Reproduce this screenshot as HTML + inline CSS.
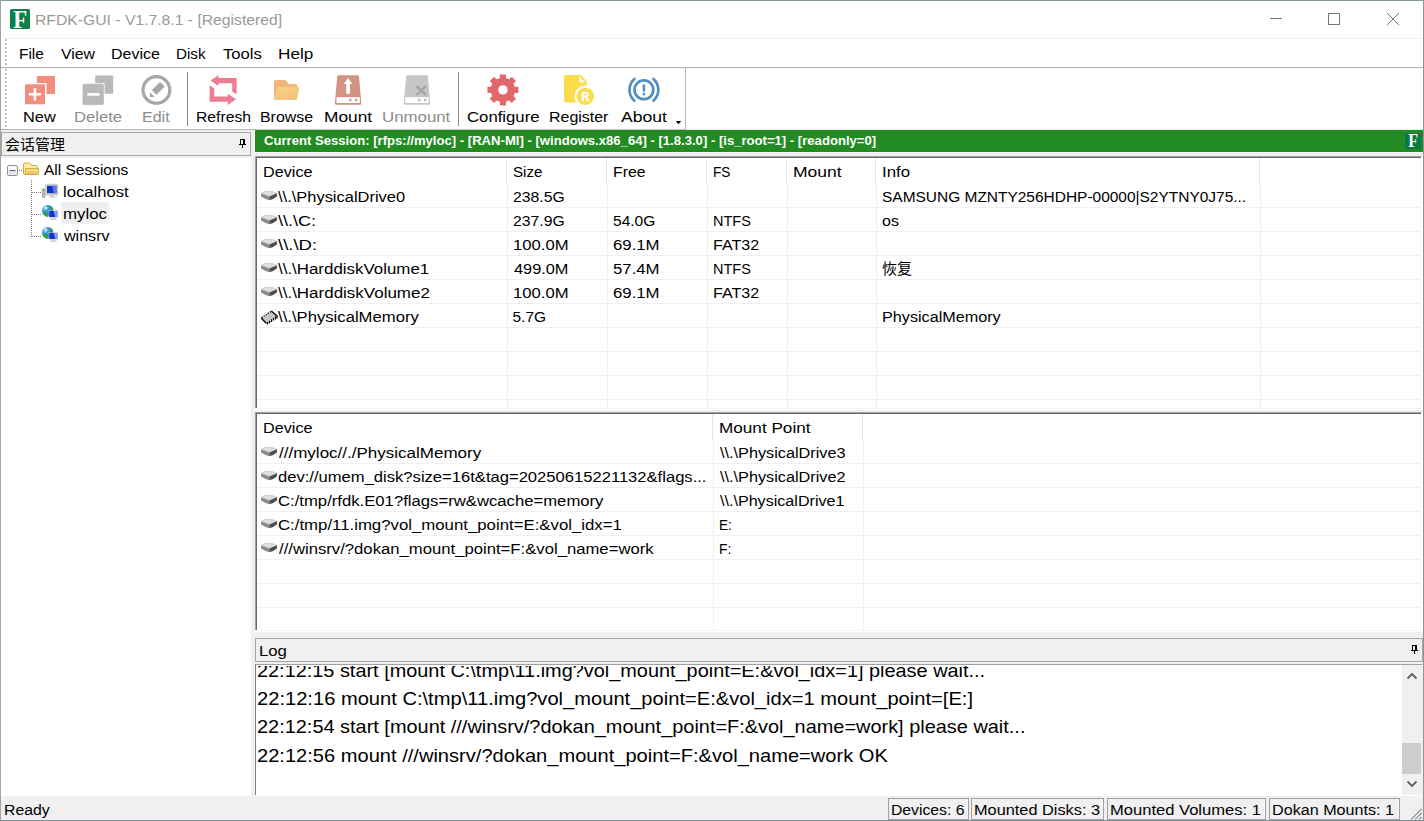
<!DOCTYPE html>
<html lang="en">
<head>
<meta charset="utf-8">
<title>RFDK-GUI - V1.7.8.1 - [Registered]</title>
<style>
*{box-sizing:border-box;margin:0;padding:0}
html,body{width:1424px;height:821px;overflow:hidden;background:#fff}
body{font-family:"Liberation Sans","Noto Sans CJK SC",sans-serif;font-size:16px;color:#000;position:relative}
.a{position:absolute}
.t{position:absolute;white-space:pre;transform-origin:0 0}
svg{position:absolute;overflow:visible}
</style>
</head>
<body>

<div class="a" style="left:0px;top:0px;width:1424px;height:821px;background:#fff;"></div>
<div class="a" style="left:1px;top:130px;width:1422px;height:691px;background:#f0f0f0;"></div>
<div class="a" style="left:1px;top:38px;width:1422px;height:1px;background:#eef1fa;"></div>
<div class="a" style="left:1px;top:67px;width:1422px;height:1px;background:#b3b3b3;"></div>
<div class="a" style="left:1px;top:68px;width:1422px;height:1px;background:#f3f5fc;"></div>
<div class="a" style="left:1px;top:129px;width:254px;height:1px;background:#b0b0b0;"></div>
<div class="a" style="left:255px;top:129px;width:431px;height:1px;background:#cdc4cc;"></div>
<div class="a" style="left:686px;top:129px;width:737px;height:1px;background:#f5e9f3;"></div>
<div class="a" style="left:685px;top:68px;width:1px;height:62px;background:#b8b8b8;"></div>
<div class="a" style="left:5px;top:39px;width:2px;height:26px;background:repeating-linear-gradient(to bottom,#c6c6c6 0,#b4b4b4 2px,transparent 2px,transparent 4px)"></div>
<div class="a" style="left:5px;top:69px;width:2px;height:58px;background:repeating-linear-gradient(to bottom,#c6c6c6 0,#b4b4b4 2px,transparent 2px,transparent 4px)"></div>
<div class="a" style="left:187px;top:72px;width:1px;height:54px;background:#8c8c8c;"></div>
<div class="a" style="left:458px;top:72px;width:1px;height:54px;background:#8c8c8c;"></div>
<div class="a" style="left:1px;top:132px;width:250px;height:24px;background:#f0f0f0;border:1px solid #a6a6a6"></div>
<div class="a" style="left:1px;top:158px;width:250px;height:638px;background:#fff;"></div>
<div class="a" style="left:61px;top:202px;width:48px;height:22px;background:#f0f0f0;"></div>
<div class="a" style="left:254px;top:130px;width:1px;height:22px;background:#fbf4fa;"></div>
<div class="a" style="left:255px;top:130px;width:1168px;height:22px;background:#228b22;"></div>
<div class="a" style="left:255px;top:152px;width:1168px;height:1px;background:#fbf4fa;"></div>
<div class="a" style="left:255px;top:156px;width:1167px;height:253px;background:#fff;"></div><div class="a" style="left:255px;top:156px;width:1167px;height:1px;background:#a0a0a0;"></div><div class="a" style="left:255px;top:156px;width:1px;height:252px;background:#a0a0a0;"></div><div class="a" style="left:256px;top:157px;width:1166px;height:1px;background:#696969;"></div><div class="a" style="left:256px;top:157px;width:1px;height:251px;background:#696969;"></div><div class="a" style="left:257px;top:408px;width:1164px;height:1px;background:#f4f4f4;"></div><div class="a" style="left:1421px;top:156px;width:1px;height:253px;background:#fff;"></div><div class="a" style="left:1422px;top:156px;width:1px;height:254px;background:#fff;"></div><div class="a" style="left:255px;top:409px;width:1168px;height:1px;background:#fff;"></div><div class="a" style="left:506px;top:158px;width:1px;height:26px;background:#e5e5e5;"></div><div class="a" style="left:606px;top:158px;width:1px;height:26px;background:#e5e5e5;"></div><div class="a" style="left:706px;top:158px;width:1px;height:26px;background:#e5e5e5;"></div><div class="a" style="left:786px;top:158px;width:1px;height:26px;background:#e5e5e5;"></div><div class="a" style="left:875px;top:158px;width:1px;height:26px;background:#e5e5e5;"></div><div class="a" style="left:1259px;top:158px;width:1px;height:26px;background:#e5e5e5;"></div><div class="a" style="left:507px;top:184px;width:1px;height:225px;background:#f0f0f0;"></div><div class="a" style="left:607px;top:184px;width:1px;height:225px;background:#f0f0f0;"></div><div class="a" style="left:707px;top:184px;width:1px;height:225px;background:#f0f0f0;"></div><div class="a" style="left:787px;top:184px;width:1px;height:225px;background:#f0f0f0;"></div><div class="a" style="left:876px;top:184px;width:1px;height:225px;background:#f0f0f0;"></div><div class="a" style="left:1260px;top:184px;width:1px;height:225px;background:#f0f0f0;"></div><div class="a" style="left:257px;top:207px;width:1164px;height:1px;background:#f0f0f0;"></div><div class="a" style="left:257px;top:231px;width:1164px;height:1px;background:#f0f0f0;"></div><div class="a" style="left:257px;top:255px;width:1164px;height:1px;background:#f0f0f0;"></div><div class="a" style="left:257px;top:279px;width:1164px;height:1px;background:#f0f0f0;"></div><div class="a" style="left:257px;top:303px;width:1164px;height:1px;background:#f0f0f0;"></div><div class="a" style="left:257px;top:327px;width:1164px;height:1px;background:#f0f0f0;"></div><div class="a" style="left:257px;top:351px;width:1164px;height:1px;background:#f0f0f0;"></div><div class="a" style="left:257px;top:375px;width:1164px;height:1px;background:#f0f0f0;"></div><div class="a" style="left:257px;top:399px;width:1164px;height:1px;background:#f0f0f0;"></div>
<div class="a" style="left:255px;top:412px;width:1167px;height:219px;background:#fff;"></div><div class="a" style="left:255px;top:412px;width:1167px;height:1px;background:#a0a0a0;"></div><div class="a" style="left:255px;top:412px;width:1px;height:218px;background:#a0a0a0;"></div><div class="a" style="left:256px;top:413px;width:1166px;height:1px;background:#696969;"></div><div class="a" style="left:256px;top:413px;width:1px;height:217px;background:#696969;"></div><div class="a" style="left:257px;top:630px;width:1164px;height:1px;background:#f4f4f4;"></div><div class="a" style="left:1421px;top:412px;width:1px;height:219px;background:#fff;"></div><div class="a" style="left:1422px;top:412px;width:1px;height:220px;background:#fff;"></div><div class="a" style="left:255px;top:631px;width:1168px;height:1px;background:#fff;"></div><div class="a" style="left:712px;top:414px;width:1px;height:26px;background:#e5e5e5;"></div><div class="a" style="left:862px;top:414px;width:1px;height:26px;background:#e5e5e5;"></div><div class="a" style="left:713px;top:440px;width:1px;height:191px;background:#f0f0f0;"></div><div class="a" style="left:863px;top:440px;width:1px;height:191px;background:#f0f0f0;"></div><div class="a" style="left:257px;top:463px;width:1164px;height:1px;background:#f0f0f0;"></div><div class="a" style="left:257px;top:487px;width:1164px;height:1px;background:#f0f0f0;"></div><div class="a" style="left:257px;top:511px;width:1164px;height:1px;background:#f0f0f0;"></div><div class="a" style="left:257px;top:535px;width:1164px;height:1px;background:#f0f0f0;"></div><div class="a" style="left:257px;top:559px;width:1164px;height:1px;background:#f0f0f0;"></div><div class="a" style="left:257px;top:583px;width:1164px;height:1px;background:#f0f0f0;"></div><div class="a" style="left:257px;top:607px;width:1164px;height:1px;background:#f0f0f0;"></div>
<div class="a" style="left:255px;top:638px;width:1168px;height:24px;background:#f0f0f0;border:1px solid #a6a6a6"></div>
<div class="a" style="left:255px;top:664px;width:1167px;height:132px;background:#fff;"></div>
<div class="a" style="left:255px;top:664px;width:1167px;height:1px;background:#a0a0a0;"></div>
<div class="a" style="left:255px;top:664px;width:1px;height:131px;background:#828282;"></div>
<div class="a" style="left:1px;top:797px;width:1422px;height:24px;background:#f0f0f0;"></div>
<div class="t" style="left:35px;top:10px;font-size:15.5px;line-height:20px;height:20px;transform:scaleX(1.0136);color:#9a9a9a;">RFDK-GUI - V1.7.8.1 - [Registered]</div>
<div class="t" style="left:18.7px;top:44px;font-size:15.5px;line-height:20px;height:20px;transform:scaleX(0.9922);">File</div>
<div class="t" style="left:60.7px;top:44px;font-size:15.5px;line-height:20px;height:20px;transform:scaleX(1.0212);">View</div>
<div class="t" style="left:110.9px;top:44px;font-size:15.5px;line-height:20px;height:20px;transform:scaleX(1.0327);">Device</div>
<div class="t" style="left:175.8px;top:44px;font-size:15.5px;line-height:20px;height:20px;transform:scaleX(0.9795);">Disk</div>
<div class="t" style="left:222.5px;top:44px;font-size:15.5px;line-height:20px;height:20px;transform:scaleX(1.075);">Tools</div>
<div class="t" style="left:277.8px;top:44px;font-size:15.5px;line-height:20px;height:20px;transform:scaleX(1.1069);">Help</div>
<div class="t" style="left:22.8px;top:107px;font-size:15.5px;line-height:20px;height:20px;transform:scaleX(1.0538);">New</div>
<div class="t" style="left:74px;top:107px;font-size:15.5px;line-height:20px;height:20px;transform:scaleX(1.0722);color:#8c8c8c;">Delete</div>
<div class="t" style="left:142.3px;top:107px;font-size:15.5px;line-height:20px;height:20px;transform:scaleX(1.035);color:#8c8c8c;">Edit</div>
<div class="t" style="left:195.6px;top:107px;font-size:15.5px;line-height:20px;height:20px;transform:scaleX(1.0152);">Refresh</div>
<div class="t" style="left:260.2px;top:107px;font-size:15.5px;line-height:20px;height:20px;transform:scaleX(1.0263);">Browse</div>
<div class="t" style="left:324.1px;top:107px;font-size:15.5px;line-height:20px;height:20px;transform:scaleX(1.1169);">Mount</div>
<div class="t" style="left:382.4px;top:107px;font-size:15.5px;line-height:20px;height:20px;transform:scaleX(1.0855);color:#8c8c8c;">Unmount</div>
<div class="t" style="left:466.5px;top:107px;font-size:15.5px;line-height:20px;height:20px;transform:scaleX(1.0789);">Configure</div>
<div class="t" style="left:549.2px;top:107px;font-size:15.5px;line-height:20px;height:20px;transform:scaleX(1.0298);">Register</div>
<div class="t" style="left:621.4px;top:107px;font-size:15.5px;line-height:20px;height:20px;transform:scaleX(1.1346);">About</div>
<div class="t" style="left:44.1px;top:160px;font-size:15.5px;line-height:20px;height:20px;transform:scaleX(0.9989);">All Sessions</div>
<div class="t" style="left:62.6px;top:182px;font-size:15.5px;line-height:20px;height:20px;transform:scaleX(1.0734);">localhost</div>
<div class="t" style="left:62.6px;top:204px;font-size:15.5px;line-height:20px;height:20px;transform:scaleX(1.0873);">myloc</div>
<div class="t" style="left:63.6px;top:226px;font-size:15.5px;line-height:20px;height:20px;transform:scaleX(1.0364);">winsrv</div>
<div class="t" style="left:264.3px;top:131px;font-size:13.5px;line-height:20px;height:20px;transform:scaleX(0.9703);font-weight:bold;color:#fff;">Current Session: [rfps://myloc] - [RAN-MI] - [windows.x86_64] - [1.8.3.0] - [is_root=1] - [readonly=0]</div>
<div class="t" style="left:262.7px;top:162px;font-size:15.5px;line-height:20px;height:20px;transform:scaleX(1.0458);">Device</div>
<div class="t" style="left:512.5px;top:162px;font-size:15.5px;line-height:20px;height:20px;transform:scaleX(0.9759);">Size</div>
<div class="t" style="left:612.8px;top:162px;font-size:15.5px;line-height:20px;height:20px;transform:scaleX(1.0234);">Free</div>
<div class="t" style="left:712.5px;top:162px;font-size:15.5px;line-height:20px;height:20px;transform:scaleX(0.88);">FS</div>
<div class="t" style="left:792.5px;top:162px;font-size:15.5px;line-height:20px;height:20px;transform:scaleX(1.1286);">Mount</div>
<div class="t" style="left:881.6px;top:162px;font-size:15.5px;line-height:20px;height:20px;transform:scaleX(1.0879);">Info</div>
<div class="t" style="left:278.4px;top:187px;font-size:15.5px;line-height:20px;height:20px;transform:scaleX(1.0613);">\\.\PhysicalDrive0</div>
<div class="t" style="left:512.5px;top:187px;font-size:15.5px;line-height:20px;height:20px;transform:scaleX(1.0185);">238.5G</div>
<div class="t" style="left:881.6px;top:187px;font-size:15.5px;line-height:20px;height:20px;transform:scaleX(0.9978);">SAMSUNG MZNTY256HDHP-00000|S2YTNY0J75...</div>
<div class="t" style="left:278.4px;top:211px;font-size:15.5px;line-height:20px;height:20px;transform:scaleX(1.1629);">\\.\C:</div>
<div class="t" style="left:512.5px;top:211px;font-size:15.5px;line-height:20px;height:20px;transform:scaleX(1.0185);">237.9G</div>
<div class="t" style="left:612.8px;top:211px;font-size:15.5px;line-height:20px;height:20px;transform:scaleX(1.0027);">54.0G</div>
<div class="t" style="left:712.5px;top:211px;font-size:15.5px;line-height:20px;height:20px;transform:scaleX(0.9361);">NTFS</div>
<div class="t" style="left:881.6px;top:211px;font-size:15.5px;line-height:20px;height:20px;transform:scaleX(1.0344);">os</div>
<div class="t" style="left:278.4px;top:235px;font-size:15.5px;line-height:20px;height:20px;transform:scaleX(1.1942);">\\.\D:</div>
<div class="t" style="left:512.5px;top:235px;font-size:15.5px;line-height:20px;height:20px;transform:scaleX(1.074);">100.0M</div>
<div class="t" style="left:612.8px;top:235px;font-size:15.5px;line-height:20px;height:20px;transform:scaleX(1.0805);">69.1M</div>
<div class="t" style="left:712.5px;top:235px;font-size:15.5px;line-height:20px;height:20px;transform:scaleX(1.0396);">FAT32</div>
<div class="t" style="left:278.4px;top:259px;font-size:15.5px;line-height:20px;height:20px;transform:scaleX(1.0899);">\\.\HarddiskVolume1</div>
<div class="t" style="left:513.5px;top:259px;font-size:15.5px;line-height:20px;height:20px;transform:scaleX(1.053);">499.0M</div>
<div class="t" style="left:612.8px;top:259px;font-size:15.5px;line-height:20px;height:20px;transform:scaleX(1.0805);">57.4M</div>
<div class="t" style="left:712.5px;top:259px;font-size:15.5px;line-height:20px;height:20px;transform:scaleX(0.9361);">NTFS</div>
<div class="t" style="left:278.4px;top:283px;font-size:15.5px;line-height:20px;height:20px;transform:scaleX(1.0949);">\\.\HarddiskVolume2</div>
<div class="t" style="left:512.5px;top:283px;font-size:15.5px;line-height:20px;height:20px;transform:scaleX(1.074);">100.0M</div>
<div class="t" style="left:612.8px;top:283px;font-size:15.5px;line-height:20px;height:20px;transform:scaleX(1.0805);">69.1M</div>
<div class="t" style="left:712.5px;top:283px;font-size:15.5px;line-height:20px;height:20px;transform:scaleX(1.0396);">FAT32</div>
<div class="t" style="left:278.4px;top:307px;font-size:15.5px;line-height:20px;height:20px;transform:scaleX(1.0756);">\\.\PhysicalMemory</div>
<div class="t" style="left:512.5px;top:307px;font-size:15.5px;line-height:20px;height:20px;transform:scaleX(1);">5.7G</div>
<div class="t" style="left:881.6px;top:307px;font-size:15.5px;line-height:20px;height:20px;transform:scaleX(1.0442);">PhysicalMemory</div>
<div class="t" style="left:262.7px;top:418px;font-size:15.5px;line-height:20px;height:20px;transform:scaleX(1.0458);">Device</div>
<div class="t" style="left:718.8px;top:418px;font-size:15.5px;line-height:20px;height:20px;transform:scaleX(1.1062);">Mount Point</div>
<div class="t" style="left:279px;top:443px;font-size:15.5px;line-height:20px;height:20px;transform:scaleX(1.0973);">///myloc//./PhysicalMemory</div>
<div class="t" style="left:719.8px;top:443px;font-size:15.5px;line-height:20px;height:20px;transform:scaleX(1.0488);">\\.\PhysicalDrive3</div>
<div class="t" style="left:278px;top:467px;font-size:15.5px;line-height:20px;height:20px;transform:scaleX(1.0701);">dev://umem_disk?size=16t&amp;tag=20250615221132&amp;flags...</div>
<div class="t" style="left:719.8px;top:467px;font-size:15.5px;line-height:20px;height:20px;transform:scaleX(1.0479);">\\.\PhysicalDrive2</div>
<div class="t" style="left:278px;top:491px;font-size:15.5px;line-height:20px;height:20px;transform:scaleX(1.0764);">C:/tmp/rfdk.E01?flags=rw&amp;wcache=memory</div>
<div class="t" style="left:719.8px;top:491px;font-size:15.5px;line-height:20px;height:20px;transform:scaleX(1.0395);">\\.\PhysicalDrive1</div>
<div class="t" style="left:278px;top:515px;font-size:15.5px;line-height:20px;height:20px;transform:scaleX(1.0826);">C:/tmp/11.img?vol_mount_point=E:&amp;vol_idx=1</div>
<div class="t" style="left:718.8px;top:515px;font-size:15.5px;line-height:20px;height:20px;transform:scaleX(0.88);">E:</div>
<div class="t" style="left:279px;top:539px;font-size:15.5px;line-height:20px;height:20px;transform:scaleX(1.0762);">///winsrv/?dokan_mount_point=F:&amp;vol_name=work</div>
<div class="t" style="left:718.8px;top:539px;font-size:15.5px;line-height:20px;height:20px;transform:scaleX(0.9023);">F:</div>
<div class="t" style="left:259px;top:641px;font-size:15.5px;line-height:20px;height:20px;transform:scaleX(1.08);">Log</div>
<div class="t" style="left:3.6px;top:800px;font-size:15.5px;line-height:20px;height:20px;transform:scaleX(1.0206);">Ready</div>
<div class="t" style="left:890.9px;top:800px;font-size:15.5px;line-height:20px;height:20px;transform:scaleX(1.0156);">Devices: 6</div>
<div class="t" style="left:973.6px;top:800px;font-size:15.5px;line-height:20px;height:20px;transform:scaleX(1.0526);">Mounted Disks: 3</div>
<div class="t" style="left:1109.9px;top:800px;font-size:15.5px;line-height:20px;height:20px;transform:scaleX(1.0679);">Mounted Volumes: 1</div>
<div class="t" style="left:1271.9px;top:800px;font-size:15.5px;line-height:20px;height:20px;transform:scaleX(1.0414);">Dokan Mounts: 1</div>
<div class="a" style="left:256px;top:666px;width:1146px;height:129px;overflow:hidden">
<div class="t" style="left:0.6px;top:-9px;font-size:19px;line-height:28px;height:28px;transform:scaleX(1.0466);">22:12:15 start [mount C:\tmp\11.img?vol_mount_point=E:&amp;vol_idx=1] please wait...</div>
<div class="t" style="left:0.6px;top:19px;font-size:19px;line-height:28px;height:28px;transform:scaleX(1.0589);">22:12:16 mount C:\tmp\11.img?vol_mount_point=E:&amp;vol_idx=1 mount_point=[E:]</div>
<div class="t" style="left:0.6px;top:47px;font-size:19px;line-height:28px;height:28px;transform:scaleX(1.0484);">22:12:54 start [mount ///winsrv/?dokan_mount_point=F:&amp;vol_name=work] please wait...</div>
<div class="t" style="left:0.6px;top:76px;font-size:19px;line-height:28px;height:28px;transform:scaleX(1.0571);">22:12:56 mount ///winsrv/?dokan_mount_point=F:&amp;vol_name=work OK</div>
</div>
<div class="t" style="left:5px;top:135px;font-size:15px;line-height:20px">会话管理</div>
<div class="t" style="left:882px;top:259px;font-size:15px;line-height:20px">恢复</div>
<div class="a" style="left:1402px;top:665px;width:20px;height:130px;background:#f0f0f0;"></div>
<div class="a" style="left:1402px;top:743px;width:19px;height:31px;background:#cdcdcd;"></div>
<svg style="left:1402px;top:665px" width="19" height="130" viewBox="0 0 19 130"><path d="M5.5 13.5L10 9l4.5 4.5" fill="none" stroke="#606060" stroke-width="1.8"/><path d="M5.5 116.5L10 121l4.5-4.5" fill="none" stroke="#606060" stroke-width="1.8"/></svg>
<div class="a" style="left:888px;top:798px;width:81px;height:22px;background:transparent;border:1px solid #a0a0a0"></div>
<div class="a" style="left:967px;top:799px;width:1px;height:20px;background:#fafafa;"></div>
<div class="a" style="left:971px;top:798px;width:133px;height:22px;background:transparent;border:1px solid #a0a0a0"></div>
<div class="a" style="left:1102px;top:799px;width:1px;height:20px;background:#fafafa;"></div>
<div class="a" style="left:1107px;top:798px;width:159px;height:22px;background:transparent;border:1px solid #a0a0a0"></div>
<div class="a" style="left:1264px;top:799px;width:1px;height:20px;background:#fafafa;"></div>
<div class="a" style="left:1269px;top:798px;width:131px;height:22px;background:transparent;border:1px solid #a0a0a0"></div>
<div class="a" style="left:1398px;top:799px;width:1px;height:20px;background:#fafafa;"></div>
<svg style="left:0;top:0" width="1424" height="821" viewBox="0 0 1424 821">
<!-- app icon -->
<rect x="10" y="9" width="20" height="20" rx="1.5" fill="#0a8147"/>
<text x="20.2" y="28" font-family="Liberation Serif,serif" font-weight="bold" font-size="24.5" text-anchor="middle" fill="#fff" transform="translate(20.200 0) scale(.93 1) translate(-20.200 0)">F</text>
<!-- window buttons -->
<g stroke="#777" stroke-width="1" fill="none">
<path d="M1270 18.5h12"/>
<rect x="1328.5" y="13.5" width="11" height="11"/>
<path d="M1387 13l12 12M1399 13l-12 12"/>
</g>
<!-- green bar small icon -->
<rect x="1405" y="133" width="16" height="16" fill="#057a45"/>
<text x="1413.2" y="147.5" font-family="Liberation Serif,serif" font-weight="bold" font-size="19" text-anchor="middle" fill="#fff" transform="translate(1413.2 0) scale(.85 1) translate(-1413.2 0)">F</text>

<!-- New -->
<rect x="37" y="76" width="18" height="18" fill="#f28e80"/>
<rect x="24" y="83" width="22.5" height="22" fill="#fff"/>
<rect x="25" y="84.3" width="20" height="20" fill="#f28e80"/>
<path d="M29.8 94.3h10.2M34.9 89.3v10.2" stroke="#fff" stroke-width="2.6" stroke-linecap="round"/>
<!-- Delete -->
<rect x="95.2" y="75.5" width="18" height="18.3" fill="#b9b9b9"/>
<rect x="82" y="83.2" width="22.6" height="22" fill="#fff"/>
<rect x="83" y="84.2" width="20.4" height="20.4" rx="1.2" fill="#b9b9b9" stroke="#aaa" stroke-width=".6"/>
<path d="M88.4 94.4h10" stroke="#fff" stroke-width="2.6" stroke-linecap="round"/>
<!-- Edit -->
<circle cx="156.4" cy="90" r="13.4" fill="none" stroke="#a6a6a6" stroke-width="3.2"/>
<path d="M160 81.9L164.7 86.6 156.5 94.8 151.8 90.1Z" fill="#a6a6a6"/>
<path d="M149.9 92.2L154.7 96.9 149.9 96.9Z" fill="#a6a6a6"/>
<!-- Refresh -->
<path d="M210.4 80.6L218.5 75.2 218.5 78.1 236.6 78.1 236.6 94.6 232.2 91.6 232.2 83.2 218.5 83.2 218.5 86.1Z" fill="#ec7c92"/>
<path d="M236.1 99.3L227.7 105 227.7 101.8 209.6 101.8 209.6 85.3 214.3 88.4 214.3 96.6 227.7 96.6 227.7 93.7Z" fill="#ec7c92"/>
<!-- Browse -->
<defs><radialGradient id="gg" cx=".3" cy=".3" r=".8"><stop offset="0" stop-color="#58c4f4"/><stop offset=".6" stop-color="#2a7fdc"/><stop offset="1" stop-color="#1a50b8"/></radialGradient><linearGradient id="fg" x1="0" y1="0" x2="1" y2="1"><stop offset="0" stop-color="#f8d27c"/><stop offset="1" stop-color="#f3c07e"/></linearGradient></defs>
<path d="M275.6 80h8.8q1.2 0 2 .9l2.4 3h6.8q1.6 0 1.6 1.600v12.800q0 1.600-1.600 1.600h-20q-1.600 0-1.600-1.600v-16.700q0-1.600 1.600-1.600z" fill="#efb678"/>
<path d="M278.600 86.700h19.300q1.800 0 1.400 1.600l-2.300 10.100q-.4 1.500-2 1.500h-19.300q-1.700 0-1.300-1.600l2.300-10.200q.3-1.400 1.900-1.400z" fill="url(#fg)"/>
<!-- Mount -->
<path d="M338.600 75.200h19q1.200 0 1.400 1.200l2.300 26.900q.1 1.500-1.400 1.500h-23.600q-1.500 0-1.400-1.500l2.300-26.900q.2-1.200 1.400-1.200z" fill="#d39384"/>
<rect x="336.500" y="97.200" width="23.300" height="5.800" fill="#fff"/>
<rect x="349.200" y="98.800" width="2.400" height="2.500" fill="#d9a196"/>
<rect x="355" y="98.800" width="2.400" height="2.500" fill="#d9a196"/>
<path d="M348.100 78.100L352.300 84.100 350 84.100 350 93.700 346.300 93.700 346.300 84.100 343.900 84.100Z" fill="#fff"/>
<!-- Unmount -->
<path d="M407.500 75.200h19q1.200 0 1.400 1.200l2.300 26.900q.1 1.500-1.400 1.500h-23.600q-1.500 0-1.400-1.500l2.300-26.900q.2-1.200 1.400-1.200z" fill="#c6c6c6"/>
<rect x="405.300" y="97.200" width="23.400" height="5.800" fill="#fff"/>
<rect x="418.100" y="98.800" width="2.400" height="2.500" fill="#bcbcbc"/>
<rect x="423.900" y="98.800" width="2.400" height="2.500" fill="#bcbcbc"/>
<path d="M416.600 86.200l9.300 8.800M425.900 86.200l-9.300 8.800" stroke="#a3a3a3" stroke-width="2.400"/>
<!-- Configure gear -->
<g fill="#e0686a">
<circle cx="502.900" cy="89.900" r="12.200"/>
<g id="tooth"><rect x="499.800" y="74.400" width="6.200" height="6" rx=".8"/></g>
<use href="#tooth" transform="rotate(45 502.900 89.900)"/>
<use href="#tooth" transform="rotate(90 502.900 89.900)"/>
<use href="#tooth" transform="rotate(135 502.900 89.900)"/>
<use href="#tooth" transform="rotate(180 502.900 89.900)"/>
<use href="#tooth" transform="rotate(225 502.900 89.900)"/>
<use href="#tooth" transform="rotate(270 502.900 89.900)"/>
<use href="#tooth" transform="rotate(315 502.900 89.900)"/>
</g>
<circle cx="502.900" cy="89.900" r="4.700" fill="#fff"/>
<!-- Register -->
<path d="M565.800 74.900h15.100l5.900 6.500v19.200q0 1.800-1.800 1.800h-19.200q-1.800 0-1.800-1.800v-23.900q0-1.800 1.800-1.800z" fill="#fbdc4c"/>
<path d="M579.300 76.300l6.200 6.300h-6.200z" fill="#fffaf0"/>
<circle cx="585.300" cy="96.300" r="10.700" fill="#fff"/>
<circle cx="585.300" cy="96.300" r="8.650" fill="#fbdc4c"/>
<text x="585.300" y="101.200" font-family="Liberation Sans,sans-serif" font-weight="bold" font-size="13.500" text-anchor="middle" fill="#fff" stroke="#fff" stroke-width=".5" transform="translate(585.300 0) scale(.8 1) translate(-585.300 0)">R</text>
<!-- About -->
<g fill="none" stroke="#4f8fc3" stroke-linecap="round">
<circle cx="643.900" cy="89.800" r="9.400" stroke-width="2.700"/>
<path d="M643.900 85.600v5" stroke-width="2.500"/>
<path d="M643.900 94v.2" stroke-width="2.600"/>
<path d="M634.400 78.900a14.500 14.500 0 0 0 0 21.800" stroke-width="2.700"/>
<path d="M653.400 78.900a14.500 14.500 0 0 1 0 21.800" stroke-width="2.700"/>
</g>
<path d="M675.800 121h5.400l-2.700 3.300z" fill="#000"/>

<!-- pins -->
<g id="pin" fill="none" stroke="#000"><rect x="240.500" y="139.500" width="4" height="5" /><path d="M243.500 139.500v5" stroke-width="1"/><path d="M239 144.500h7M242.500 145v3"/></g>
<use href="#pin" transform="translate(1172 506)"/>

<!-- tree -->
<rect x="7.500" y="165.500" width="10" height="10" rx="1.500" fill="#fbfbfb" stroke="#919191"/>
<rect x="8.500" y="171" width="8" height="4" fill="#e6e6e6"/>
<path d="M9.500 170.500h6" stroke="#4b63a7" stroke-width="1"/>
<g stroke="#808080" stroke-width="1" stroke-dasharray="1 1" fill="none">
<path d="M19 170.500h4"/>
<path d="M31.500 180v57"/>
<path d="M32 192.500h10M32 214.500h10M32 236.500h10"/>
</g>
<!-- folder -->
<path d="M23.500 164.500q0-1.500 1.500-1.500h4q1 0 1.600.9l1 1.600h4.400q1 0 1 1v2h1.500v4.500q0 1.500-1.500 1.500h-12q-1.500 0-1.500-1.500z" fill="#fdf0a0" stroke="#d9a441" stroke-width="1"/>
<path d="M25.500 168.500h13v4.500q0 1.500-1.500 1.500h-10q-1.500 0-1.500-1.500z" fill="#fbe27a" stroke="#c89a3a" stroke-width=".8"/>
<rect x="26.500" y="171" width="10.500" height="3" fill="#f9c56a"/>
<!-- localhost computer -->
<rect x="42.300" y="188.800" width="2.700" height="8.700" rx=".8" fill="#b8b8b8" stroke="#8a8a8a" stroke-width=".5"/>
<rect x="42.900" y="189.400" width="1.500" height="1.300" fill="#3fc53f"/>
<rect x="45.500" y="184.200" width="12.400" height="10.800" rx="1" fill="#d8d5cf" stroke="#b4b0a8" stroke-width=".5"/>
<rect x="47" y="185.800" width="9.500" height="7.400" fill="#1232c8"/>
<path d="M52 185.800h4.500v7.400h-2.500z" fill="#5b7fe6"/>
<path d="M50 195h3.500l.8 1.700h3v.9h-9v-.9h2z" fill="#c9c9c9"/>
<!-- globe icons -->
<g id="globe">
<circle cx="47.700" cy="210.700" r="5.700" fill="url(#gg)"/>
<path d="M49.800 205.500q2.600.9 3.400 3.400l-1.600 1.400q-1.700-.6-1.600-2.200.6-1.300-.2-2.600zM42.600 211.800q2.200-1 3.800.4t2.200 3.800q-1.200 1.100-2.800.500-2.600-1.500-3.200-4.700z" fill="#2fa536"/>
<circle cx="45.800" cy="208" r="1.700" fill="#c8f0ff" opacity=".85"/>
<path d="M50.500 218h5l.8 1.200h1.200v.9h-7.500z" fill="#d4d4d4"/>
<rect x="49" y="210.700" width="8.500" height="6.500" fill="#1230c4" stroke="#dcdcdc" stroke-width=".5"/>
<path d="M53.500 210.900h3.800v6.100h-2z" fill="#7f9cf0"/>
</g>
<use href="#globe" transform="translate(0 22)"/>

<!-- list icons -->
<g id="disk">
<path d="M261.200 193.300L264.400 191.300 271.800 191.300 277 193.300 269.400 196.600Z" fill="#dcdcdc" stroke="#bdbdbd" stroke-width=".5"/>
<path d="M261 193.300L269.400 196.600 269.400 200.300 265.500 198.900 261 196.500Z" fill="#8c8c8c"/>
<path d="M269.400 196.600L277 193.300 277 196.300 273.200 198.900 269.400 200.300Z" fill="#4c4c4c"/>
</g>
<use href="#disk" y="24"/><use href="#disk" y="48"/><use href="#disk" y="72"/><use href="#disk" y="96"/>
<use href="#disk" y="256"/><use href="#disk" y="280"/><use href="#disk" y="304"/><use href="#disk" y="328"/><use href="#disk" y="352"/>
<!-- memory chip -->
<path d="M261.500 318L271.700 311.200 276.900 316 266.200 323.200Z" fill="#c6c6c6"/>
<path d="M261.600 317.600L271.800 310.900" stroke="#000" stroke-width="1.400" stroke-dasharray="1.200 1.250" fill="none"/>
<path d="M271.300 310.900L277 316M261.200 318L266.200 323.300" stroke="#000" stroke-width="1.300" fill="none"/>
<path d="M267.500 322v2.600M269.500 320.700v2.600M271.500 319.300v2.600M273.500 318v2.600M275.500 316.600v2.800M277 315.300v3" stroke="#000" stroke-width="1.300" fill="none"/>
<!-- size grip -->
<g stroke="#fff" stroke-width="1.200"><path d="M1409.800 819.300l11.500-11.500M1413.800 819.300l7.500-7.500M1417.800 819.300l3.500-3.500"/></g>
<g stroke="#9c9c9c" stroke-width="1.500"><path d="M1411 819.500l10.700-10.700M1415 819.500l6.700-6.700M1419 819.500l2.700-2.700"/></g>
</svg>

<div class="a" style="left:0px;top:0px;width:1424px;height:1px;background:#869a9a;"></div>
<div class="a" style="left:0px;top:0px;width:1px;height:821px;background:#9aa5a4;"></div>
<div class="a" style="left:1423px;top:0px;width:1px;height:821px;background:#86999a;"></div>
<div class="a" style="left:0px;top:820px;width:1424px;height:1px;background:#7d9290;"></div>

</body>
</html>
